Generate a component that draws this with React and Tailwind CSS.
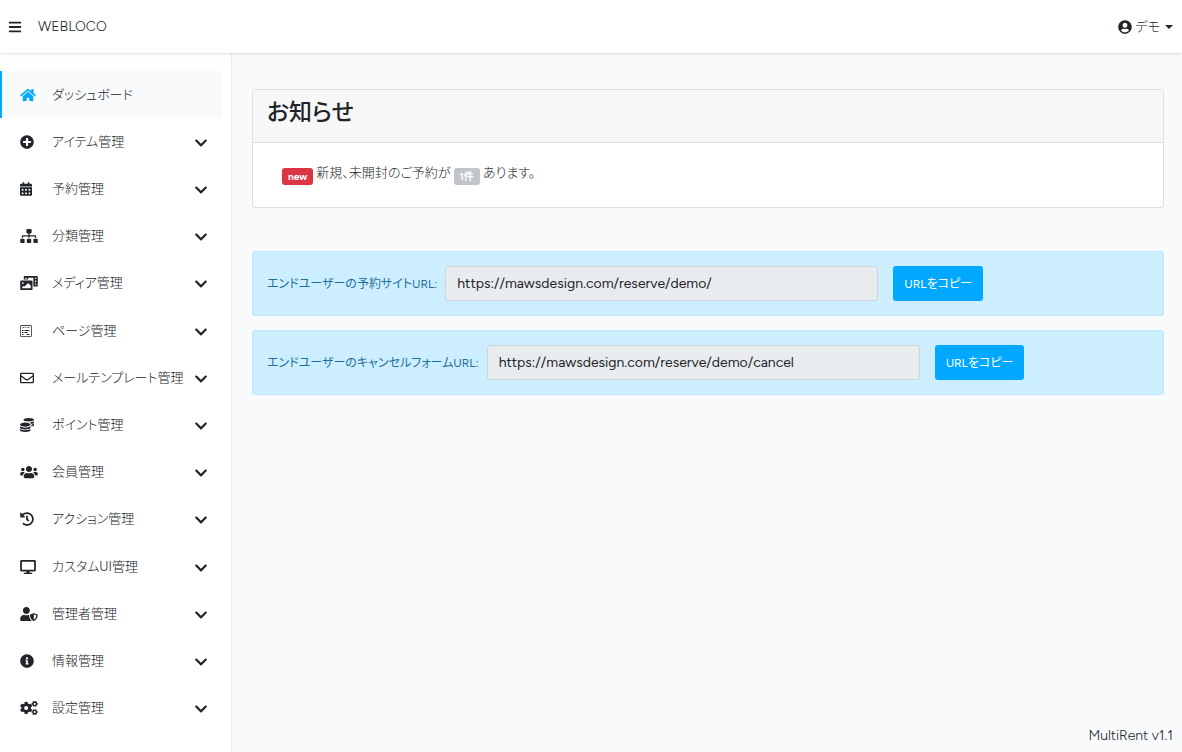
import {
    FaBars,
    FaCalendarAlt,
    FaChevronDown,
    FaCogs,
    FaCoins,
    FaDesktop,
    FaHistory,
    FaHome,
    FaInfoCircle,
    FaPhotoVideo,
    FaPlusCircle,
    FaRegEnvelope,
    FaSitemap,
    FaUserCircle,
    FaUserShield,
    FaUsers,
} from "react-icons/fa";

function PageIcon({ className }) {
    return (
        <svg viewBox="0 0 12 14" fill="none" stroke="currentColor" className={className} aria-hidden="true">
            <rect x="0.5" y="1.5" width="11" height="11" rx="0.5" strokeOpacity="0.75" />
            <path d="M2 1.5h1.5M5 1.5h2M8.5 1.5h1.5M2.5 3.5h2M5.5 3.5h1M7.5 3.5h2" strokeOpacity="0.7" />
            <path d="M2 6.5h1.5M4.5 6.5h5M2 8.5h1.5M4.5 8.5h3M2 10.5h1.5M6.5 10.5h3" />
        </svg>
    );
}

const menu = [
    { label: "アイテム管理", icon: FaPlusCircle, size: "w-[14px]" },
    { label: "予約管理", icon: FaCalendarAlt, size: "w-3" },
    { label: "分類管理", icon: FaSitemap, size: "w-[18px]" },
    { label: "メディア管理", icon: FaPhotoVideo, size: "w-[18px]" },
    { label: "ページ管理", icon: PageIcon, size: "w-3" },
    { label: "メールテンプレート管理", icon: FaRegEnvelope, size: "w-[14px]" },
    { label: "ポイント管理", icon: FaCoins, size: "w-[14px]" },
    { label: "会員管理", icon: FaUsers, size: "w-[18px]" },
    { label: "アクション管理", icon: FaHistory, size: "w-[14px]" },
    { label: "カスタムUI管理", icon: FaDesktop, size: "w-4" },
    { label: "管理者管理", icon: FaUserShield, size: "w-[18px]" },
    { label: "情報管理", icon: FaInfoCircle, size: "w-[14px]" },
    { label: "設定管理", icon: FaCogs, size: "w-[18px]" },
];

const links = [
    { id: "reserve-url", label: "エンドユーザーの予約サイトURL:", url: "https://mawsdesign.com/reserve/demo/" },
    { id: "cancel-url", label: "エンドユーザーのキャンセルフォームURL:", url: "https://mawsdesign.com/reserve/demo/cancel" },
];

function Header() {
    return (
        <header className="relative z-10 flex h-[53px] items-center bg-white pr-[9px] pl-2 shadow-sm">
            <button type="button" aria-label="メニュー" className="mr-4">
                <FaBars className="h-[14px] w-[14px]" />
            </button>
            <a href="#" className="text-sm font-light">WEBLOCO</a>
            <button type="button" className="ml-auto flex items-center font-light">
                <FaUserCircle className="mr-[3px] h-[14px] w-[14px]" />
                デモ
                <svg viewBox="0 0 8 4" className="ml-[5px] h-1 w-2" fill="currentColor" aria-hidden="true">
                    <path d="M0 0h8L4 4z" />
                </svg>
            </button>
        </header>
    );
}

function Sidebar() {
    return (
        <nav className="flex w-[232px] shrink-0 flex-col border-r border-[#ebedef] bg-white pt-[18px] pr-[9px] pb-5 font-light">
            <a href="#" className="flex h-[47px] items-center border-l-2 border-[#00a8ff] bg-[#f8fafc] pl-[18px]">
                <FaHome className="mr-4 h-[14px] w-4 text-[#00a8ff]" />
                ダッシュボード
            </a>
            <ul className="flex flex-1 flex-col">
                {menu.map(({ label, icon: Icon, size }) => (
                    <li key={label} className="flex min-h-11 flex-1">
                        <button type="button" className="flex w-full items-center pr-[14px] pl-5">
                            <span className="flex w-8 shrink-0">
                                <Icon className={`h-[14px] ${size}`} />
                            </span>
                            {label}
                            <FaChevronDown className="mt-[2px] ml-auto h-[14px] w-[14px]" />
                        </button>
                    </li>
                ))}
            </ul>
        </nav>
    );
}

function Notice() {
    return (
        <section className="mb-[43px] rounded-[3px] border border-[#dcdedf] bg-white">
            <h1 className="border-b border-[#dcdedf] bg-[#f7f7f7] px-[14px] pt-1 pb-3 text-[23px] leading-9 font-medium">
                お知らせ
            </h1>
            <p className="flex items-end gap-[3px] px-[29px] pt-[18px] pb-[22px] leading-6 font-light">
                <span className="rounded-[3px] bg-[#dc3545] px-[6px] text-[10px] leading-[17px] font-bold text-white">new</span>
                新規、未開封のご予約が
                <span className="rounded-[3px] bg-[#c1c5c9] px-[6px] text-[10px] leading-[17px] font-bold text-white">1件</span>
                あります。
            </p>
        </section>
    );
}

function UrlRow({ id, label, url }) {
    return (
        <div className="mb-[14px] flex items-center rounded-[3px] border border-[#b8e7ff] bg-[#cceeff] p-[14px]">
            <label htmlFor={id} className="mr-2 text-xs text-[#1f6f9c]">{label}</label>
            <input
                id={id}
                type="text"
                readOnly
                value={url}
                className="mr-[15px] h-[35px] w-[433px] min-w-0 rounded-[3px] border border-[#ced4da] bg-[#e9ecef] px-[11px] text-sm"
            />
            <button type="button" className="h-[35px] shrink-0 rounded-[3px] bg-[#00a8ff] px-[11px] text-xs text-white">
                URLをコピー
            </button>
        </div>
    );
}

export default function App() {
    return (
        <div className="flex min-h-screen flex-col bg-[#f8fafc] font-['Figtree','Inter','Noto_Sans_CJK_JP',sans-serif] text-[13px] leading-5 text-[#212529] [font-feature-settings:'palt']">
            <Header />
            <div className="flex flex-1">
                <Sidebar />
                <div className="flex min-w-0 flex-1 flex-col pt-9 pr-[18px] pl-5">
                    <main className="flex-1">
                        <Notice />
                        {links.map(link => (
                            <UrlRow key={link.id} {...link} />
                        ))}
                    </main>
                    <footer className="-mr-[9px] pb-[6px] text-right text-sm font-light">MultiRent v1.1</footer>
                </div>
            </div>
        </div>
    );
}
